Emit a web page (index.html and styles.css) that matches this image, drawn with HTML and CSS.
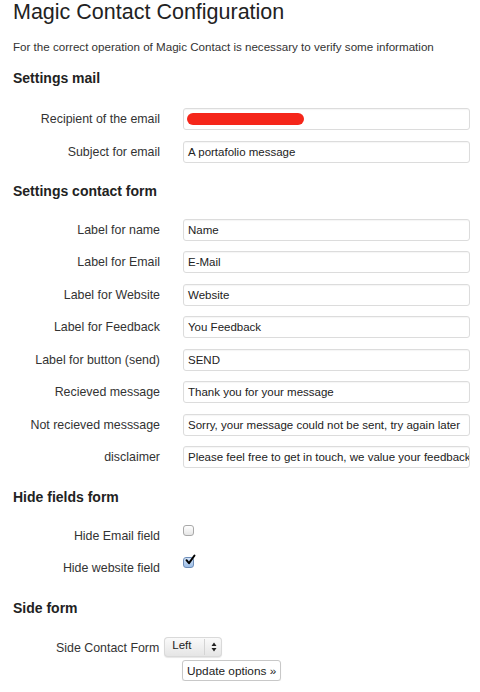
FILE: index.html
```html
<!DOCTYPE html>
<html>
<head>
<meta charset="utf-8">
<link rel="stylesheet" href="styles.css">
</head>
<body>
<div class="wrap">
  <h1 class="title">Magic Contact Configuration</h1>
  <p class="intro">For the correct operation of Magic Contact is necessary to verify some information</p>

  <h3 class="section first">Settings mail</h3>
  <div class="form">
    <label class="lbl">Recipient of the email</label>
    <div class="field"><span class="redact"></span></div>
    <label class="lbl">Subject for email</label>
    <div class="field">A portafolio message</div>
  </div>

  <h3 class="section">Settings contact form</h3>
  <div class="form second">
    <label class="lbl">Label for name</label>
    <div class="field">Name</div>
    <label class="lbl">Label for Email</label>
    <div class="field">E-Mail</div>
    <label class="lbl">Label for Website</label>
    <div class="field">Website</div>
    <label class="lbl">Label for Feedback</label>
    <div class="field">You Feedback</div>
    <label class="lbl">Label for button (send)</label>
    <div class="field">SEND</div>
    <label class="lbl">Recieved message</label>
    <div class="field">Thank you for your message</div>
    <label class="lbl">Not recieved messsage</label>
    <div class="field">Sorry, your message could not be sent, try again later</div>
    <label class="lbl">disclaimer</label>
    <div class="field">Please feel free to get in touch, we value your feedback</div>
  </div>

  <h3 class="section after-second">Hide fields form</h3>
  <div class="form checks">
    <label class="lbl">Hide Email field</label>
    <div class="chk-cell"><span class="chk"></span></div>
    <label class="lbl">Hide website field</label>
    <div class="chk-cell"><span class="chk on"><svg viewBox="0 0 12 12" width="12" height="12"><path d="M2.5 6.2 L5 9.2 L10.5 1.5" fill="none" stroke="#000" stroke-width="2" stroke-linecap="round" stroke-linejoin="round"/></svg></span></div>
  </div>

  <h3 class="section side-head">Side form</h3>
  <div class="side">
    <label class="side-lbl">Side Contact Form</label>
    <div class="select"><span class="sel-text">Left</span><span class="sel-arrows"><svg viewBox="0 0 6 10" width="6" height="10"><path d="M3 0.5 L5.5 4 L0.5 4 Z M3 9.5 L5.5 6 L0.5 6 Z" fill="#222"/></svg></span></div>
  </div>
  <div class="actions"><button class="btn">Update options »</button></div>
</div>
</body>
</html>
```
FILE: styles.css
```css
html, body {
  margin: 0;
  padding: 0;
  background: #fff;
}
body {
  font-family: "Liberation Sans", Arial, Helvetica, sans-serif;
  color: #333;
}
.wrap {
  width: 480px;
  padding: 0 10px 0 13px;
  box-sizing: border-box;
}
.title {
  margin: 0;
  font-size: 21.5px;
  font-weight: normal;
  line-height: 24px;
  color: #222;
}
.intro {
  margin: 16px 0 0;
  font-size: 11.6px;
  line-height: 14px;
  color: #333;
}
.section {
  margin: 20px 0 0;
  font-size: 14px;
  line-height: 17px;
  font-weight: bold;
  color: #222;
}
.section.first {
  margin-top: 16px;
}
.section.after-second {
  margin-top: 21px;
}
.section.side-head {
  margin-top: 25px;
}
.form {
  display: grid;
  grid-template-columns: 147px 1fr;
  column-gap: 23px;
  row-gap: 10.5px;
  margin-top: 21px;
  align-items: center;
}
.form.second {
  margin-top: 19px;
}
.lbl {
  text-align: right;
  font-size: 12.4px;
  color: #333;
}
.field {
  height: 20px;
  border: 1px solid #dcdcdc;
  border-radius: 3px;
  box-shadow: inset 0 1px 1px rgba(0,0,0,0.04);
  padding: 0 4px;
  font-size: 11.5px;
  line-height: 20px;
  color: #222;
  white-space: nowrap;
  overflow: hidden;
  display: flex;
  align-items: center;
}
.redact {
  display: block;
  width: 117px;
  height: 12px;
  background: #f5261a;
  border-radius: 6px;
  margin-left: -1px;
  flex-shrink: 0;
}
.checks {
  row-gap: 12px;
  margin-top: 17px;
  align-items: stretch;
}
.checks .lbl {
  align-self: end;
  line-height: 14px;
}
.chk-cell {
  height: 20px;
}
.chk {
  display: block;
  width: 9px;
  height: 9px;
  border: 1px solid #a9a9a9;
  border-radius: 3px;
  background: linear-gradient(#fff, #e6e6e6);
  position: relative;
  margin-top: 2px;
}
.chk.on {
  border-color: #6d8db8;
  background: linear-gradient(#d4e4f8, #9cbde6);
  margin-top: 2px;
}
.chk svg {
  position: absolute;
  left: -0.5px;
  top: -4px;
}
.side {
  display: flex;
  align-items: flex-end;
  margin-top: 20px;
  padding-left: 43px;
}
.side-lbl {
  font-size: 12.4px;
  line-height: 14px;
  color: #333;
  margin-right: 5px;
  margin-bottom: 2px;
}
.select {
  display: flex;
  width: 58px;
  height: 20px;
  border-radius: 4px;
  background: linear-gradient(#fbfbfb, #e4e4e4);
  box-shadow: 0 0 0 1px #d9d9d9 inset, 0 1px 1px rgba(0,0,0,0.1);
  font-size: 11.5px;
  color: #222;
}
.sel-text {
  flex: 1;
  padding: 1px 0 0 8px;
  line-height: 14px;
}
.sel-arrows {
  width: 17px;
  border-left: 1px solid #d4d4d4;
  display: flex;
  align-items: center;
  justify-content: center;
  margin: 2px 0;
}
.actions {
  padding-left: 169px;
  margin-top: 3px;
}
.btn {
  display: block;
  font-family: "Liberation Sans", Arial, Helvetica, sans-serif;
  font-size: 11.8px;
  color: #222;
  background: #fff;
  border: 1px solid #c8c8c8;
  border-radius: 3px;
  height: 21px;
  padding: 0 4px;
  box-shadow: 0 1px 1px rgba(0,0,0,0.08);
}
```
